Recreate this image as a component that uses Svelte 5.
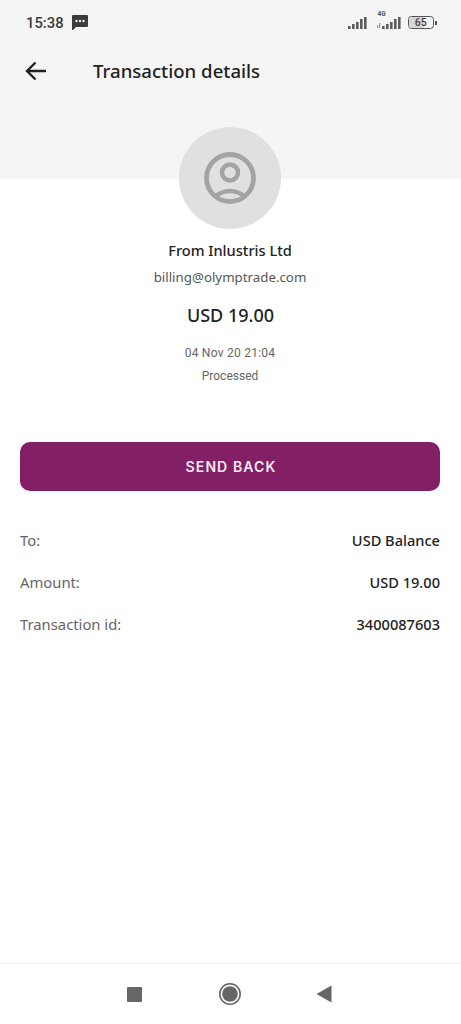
<script lang="ts">
    const rows = [
        { label: 'To:', value: 'USD Balance' },
        { label: 'Amount:', value: 'USD 19.00' },
        { label: 'Transaction id:', value: '3400087603' },
    ];
    const bars = [
        { x: 0, h: 3 },
        { x: 4, h: 5 },
        { x: 8, h: 7 },
        { x: 12, h: 10 },
        { x: 16, h: 12 },
    ];
</script>

<div class="screen">
    <header class="top">
        <div class="status">
            <div class="status-left">
                <span class="time">15:38</span>
                <svg width="16" height="15" viewBox="0 0 16 15">
                    <path d="M1 0h14a1 1 0 0 1 1 1v10a1 1 0 0 1-1 1H4l-3 3H0V1a1 1 0 0 1 1-1z" fill="#3c3c3c" />
                    <circle cx="4.5" cy="6" r="1.2" fill="#f5f5f5" />
                    <circle cx="8" cy="6" r="1.2" fill="#f5f5f5" />
                    <circle cx="11.5" cy="6" r="1.2" fill="#f5f5f5" />
                </svg>
            </div>
            <div class="status-right">
                <svg width="19" height="12" viewBox="0 0 19 12">
                    {#each bars as b}
                        <rect x={b.x} y={12 - b.h} width="2.6" height={b.h} fill="#5c5c5c" />
                    {/each}
                </svg>
                <div class="lte">
                    <span class="lte-label">4G</span>
                    <svg width="24" height="12" viewBox="0 0 24 12">
                        <rect x="0" y="8" width="1.2" height="3" fill="#999" />
                        <rect x="2" y="6" width="1.2" height="5" fill="#999" />
                        {#each bars as b}
                            <rect x={b.x + 5} y={12 - b.h} width="2.6" height={b.h} fill="#5c5c5c" />
                        {/each}
                    </svg>
                </div>
                <div class="battery">
                    <div class="battery-body">
                        <div class="battery-fill"></div>
                        <span>65</span>
                    </div>
                    <div class="battery-tip"></div>
                </div>
            </div>
        </div>
        <div class="toolbar">
            <svg class="back" width="24" height="22" viewBox="0 0 24 22">
                <path d="M23 11H4.500M12.500 2.500 4 11l8.500 8.500" fill="none" stroke="#222" stroke-width="2.400" />
            </svg>
            <h1>Transaction details</h1>
        </div>
    </header>

    <main>
        <div class="avatar">
            <svg width="52" height="52" viewBox="0 0 52 52">
                <circle cx="26" cy="26" r="23.500" fill="none" stroke="#a3a3a3" stroke-width="4.800" />
                <circle cx="26" cy="20.500" r="8" fill="none" stroke="#a3a3a3" stroke-width="4.500" />
                <path d="M10 45Q26 33 42 45" fill="none" stroke="#a3a3a3" stroke-width="4.500" />
            </svg>
        </div>
        <div class="from">From Inlustris Ltd</div>
        <div class="email">billing@olymptrade.com</div>
        <div class="amount">USD 19.00</div>
        <div class="date">04 Nov 20 21:04</div>
        <div class="state">Processed</div>

        <button class="send" type="button">SEND BACK</button>

        <dl class="details">
            {#each rows as row}
                <div class="row">
                    <dt>{row.label}</dt>
                    <dd>{row.value}</dd>
                </div>
            {/each}
        </dl>
    </main>

    <nav class="navbar">
        <div class="nav-square"></div>
        <svg class="nav-home" width="22" height="22" viewBox="0 0 22 22">
            <circle cx="11" cy="11" r="10.200" fill="none" stroke="#666" stroke-width="1.600" />
            <circle cx="11" cy="11" r="7.800" fill="#666" />
        </svg>
        <svg class="nav-back" width="16" height="18" viewBox="0 0 16 18">
            <path d="M15.500 0.500V17.500L0.500 9z" fill="#666" />
        </svg>
    </nav>
</div>

<style>
    :global(body) {
        margin: 0;
        background: #fff;
    }

    .screen {
        width: 461px;
        height: 1024px;
        display: flex;
        flex-direction: column;
        font-family: "Noto Sans", sans-serif;
        color: #222;
        overflow: hidden;
    }

    .top {
        height: 179px;
        flex: none;
        background: #f5f5f5;
        box-sizing: border-box;
    }

    .status {
        height: 45px;
        display: flex;
        justify-content: space-between;
        align-items: center;
        padding: 0 24px 0 26px;
    }

    .status-left {
        display: flex;
        align-items: center;
        gap: 8px;
    }

    .time {
        font-family: Roboto, sans-serif;
        font-weight: 500;
        font-size: 14.800px;
        color: #3c3c3c;
    }

    .status-right {
        display: flex;
        align-items: center;
        gap: 10px;
    }

    .lte {
        position: relative;
        display: flex;
    }

    .lte-label {
        position: absolute;
        left: 1px;
        top: -7px;
        font-family: Roboto, sans-serif;
        font-size: 6.500px;
        font-weight: 700;
        color: #555;
    }

    .battery {
        display: flex;
        align-items: center;
        margin-left: -3px;
    }

    .battery-body {
        position: relative;
        width: 26.500px;
        height: 13px;
        box-sizing: border-box;
        border: 1.500px solid #555;
        border-radius: 3.500px;
        display: flex;
        align-items: center;
        justify-content: center;
        overflow: hidden;
    }

    .battery-fill {
        position: absolute;
        left: 0;
        top: 0;
        bottom: 0;
        width: 65%;
        background: #d6d6d6;
    }

    .battery-body span {
        position: relative;
        font-family: Roboto, sans-serif;
        font-size: 10.500px;
        font-weight: 500;
        color: #444;
    }

    .battery-tip {
        width: 2px;
        height: 4px;
        margin-left: 1px;
        background: #555;
    }

    .toolbar {
        height: 52px;
        display: flex;
        align-items: center;
        padding-left: 23px;
    }

    .back {
        flex: none;
    }

    h1 {
        margin: 0 0 2px 46px;
        font-size: 18.600px;
        font-weight: 500;
        color: #222;
    }

    main {
        flex: 1;
        display: flex;
        flex-direction: column;
        align-items: center;
        padding: 0 21px 0 20px;
    }

    .avatar {
        width: 102px;
        height: 102px;
        margin-top: -52px;
        flex: none;
        border-radius: 50%;
        background: #e0e0e0;
        display: flex;
        align-items: center;
        justify-content: center;
    }

    .from {
        margin-top: 10px;
        font-size: 14.600px;
        line-height: 22px;
        font-weight: 500;
        color: #222;
    }

    .email {
        margin-top: 6px;
        font-size: 13.300px;
        line-height: 20px;
        color: #555;
    }

    .amount {
        margin-top: 15px;
        padding-left: 1px;
        font-size: 18px;
        line-height: 26px;
        font-weight: 500;
        color: #222;
    }

    .date {
        margin-top: 17px;
        font-family: Roboto, sans-serif;
        font-size: 12px;
        line-height: 16px;
        letter-spacing: 0.25px;
        color: #666;
    }

    .state {
        margin-top: 7px;
        font-family: Roboto, sans-serif;
        font-size: 12px;
        line-height: 16px;
        color: #666;
    }

    .send {
        width: 100%;
        height: 49px;
        margin-top: 58px;
        padding-left: 8px;
        flex: none;
        border: none;
        border-radius: 10px;
        background: #831f65;
        color: #f6eaf2;
        font-family: Inter, Roboto, sans-serif;
        font-size: 14px;
        font-weight: 600;
        letter-spacing: 1.100px;
    }

    .details {
        width: 100%;
        margin: 38px 0 0;
        display: flex;
        flex-direction: column;
        gap: 21px;
    }

    .row {
        display: flex;
        justify-content: space-between;
        align-items: center;
        height: 21.500px;
    }

    .row + .row {
        margin-top: -0.500px;
    }

    dt {
        font-size: 14.800px;
        color: #666;
    }

    dd {
        margin: 0;
        font-size: 14.600px;
        font-weight: 500;
        color: #222;
    }

    .navbar {
        height: 61px;
        flex: none;
        border-top: 1px solid #f0f0f0;
        display: flex;
        align-items: center;
        box-sizing: border-box;
        padding-left: 127px;
    }

    .nav-square {
        width: 15px;
        height: 15px;
        border-radius: 1px;
        background: #666;
    }

    .nav-home {
        margin-left: 77px;
    }

    .nav-back {
        margin-left: 75px;
    }
</style>
